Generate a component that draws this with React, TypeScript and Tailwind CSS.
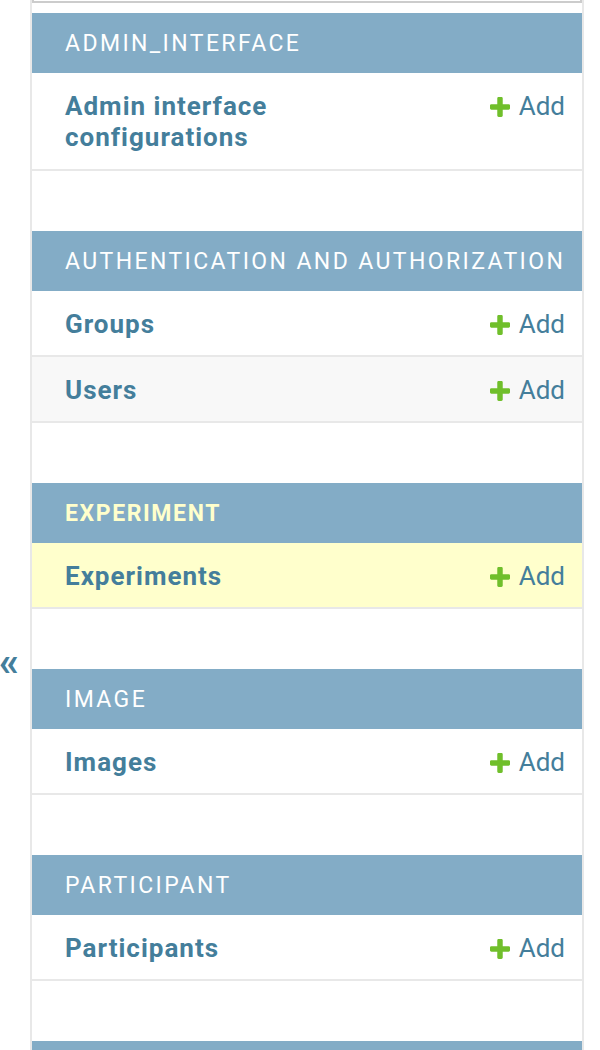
import React from 'react';

type Model = { name: string; current?: boolean; hover?: boolean };
type AppModule = { label: string; current?: boolean; models: Model[] };

const modules: AppModule[] = [
  { label: 'Admin_interface', models: [{ name: 'Admin interface configurations' }] },
  {
    label: 'Authentication and Authorization',
    models: [{ name: 'Groups' }, { name: 'Users', hover: true }],
  },
  { label: 'Experiment', current: true, models: [{ name: 'Experiments', current: true }] },
  { label: 'Image', models: [{ name: 'Images' }] },
  { label: 'Participant', models: [{ name: 'Participants' }] },
  // next app module, only its header edge shows at the bottom
  { label: '', models: [] },
];

const PlusIcon = () => (
  <svg width="20" height="20" viewBox="192 192 1408 1408" className="shrink-0">
    <path
      fill="#70bf2b"
      d="M1600 796v192q0 40-28 68t-68 28h-416v416q0 40-28 68t-68 28h-192q-40 0-68-28t-28-68v-416h-416q-40 0-68-28t-28-68v-192q0-40 28-68t68-28h416v-416q0-40 28-68t68-28h192q40 0 68 28t28 68v416h416q40 0 68 28t28 68z"
    />
  </svg>
);

function ModuleBlock({ mod }: { mod: AppModule }) {
  return (
    <div className="mb-[60px]">
      <div
        className={
          'h-[60px] flex items-center pl-[33px] pt-[3px] bg-[#83acc6] uppercase text-[23px] ' +
          (mod.current ? 'text-[#ffffcc] font-bold tracking-[1.6px]' : 'text-white tracking-[2.4px]')
        }
      >
        {mod.label}
      </div>
      {mod.models.map((m) => (
        <div
          key={m.name}
          className={
            'flex items-start justify-between pl-[33px] pr-[17px] pt-[18px] border-b-2 border-[#e8e8e8] ' +
            (m.name.length > 20 ? 'pb-[16px] ' : 'pb-[15px] ') +
            (m.current ? 'bg-[#ffffcc]' : m.hover ? 'bg-[#f8f8f8]' : 'bg-white')
          }
        >
          <span className="max-w-[320px] font-bold text-[26px] leading-[31px] tracking-[1px] text-[#447e9b]">
            {m.name}
          </span>
          <span className="flex items-center gap-[9px] text-[26px] leading-[31px] text-[#447e9b]">
            <PlusIcon />
            Add
          </span>
        </div>
      ))}
    </div>
  );
}

export default function App() {
  return (
    <div
      className="flex w-[600px] h-[1050px] overflow-hidden bg-white"
      style={{ fontFamily: 'Roboto, "Noto Sans", sans-serif' }}
    >
      <div className="w-[32px] shrink-0 border-r-2 border-[#e8e8e8] pt-[643px]">
        <button className="text-[40px] leading-[40px] font-bold text-[#447e9b] -ml-[1px]">«</button>
      </div>
      <div className="w-[552px] shrink-0 border-r-2 border-[#e8e8e8]">
        <div className="h-[3px] border-x-2 border-b-2 border-[#cccccc]" />
        <div className="pt-[10px]">
          {modules.map((mod, i) => (
            <ModuleBlock key={i} mod={mod} />
          ))}
        </div>
      </div>
    </div>
  );
}
